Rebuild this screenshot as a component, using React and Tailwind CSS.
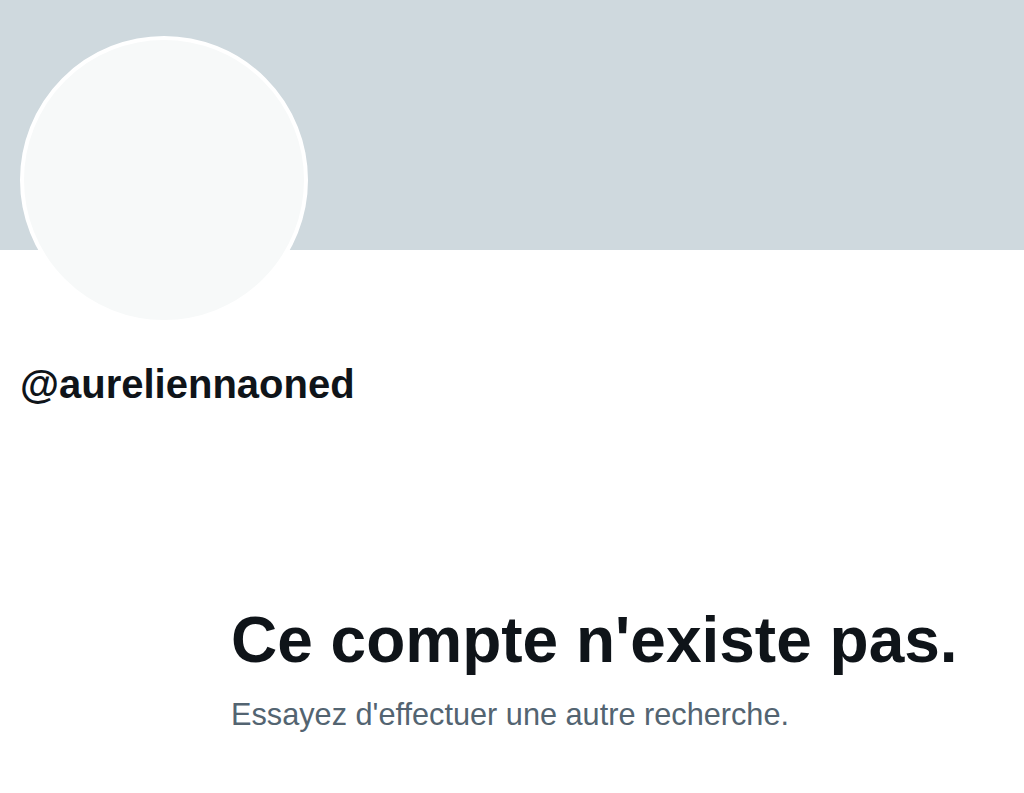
export default function App() {
    return (
        <div className="min-h-screen bg-white" style={{ fontFamily: '"Liberation Sans", Arial, sans-serif' }}>
            {/* banner */}
            <div className="h-[250px] bg-[#cfd9de]"></div>

            <div className="px-[20px]">
                {/* avatar */}
                <div className="-mt-[214px] w-[288px] h-[288px] rounded-full border-[4px] border-white bg-[#f7f9f9]"></div>

                <div className="mt-[36px] text-[40px] leading-[48px] font-bold text-[#0f1419]">
                    @aureliennaoned
                </div>
            </div>

            <div className="pl-[231px] mt-[194px]">
                <h1 className="text-[64px] leading-[77px] font-bold text-[#0f1419]">
                    Ce compte n'existe pas.
                </h1>
                <p className="mt-[17px] text-[30.7px] leading-[37px] text-[#536471]">
                    Essayez d'effectuer une autre recherche.
                </p>
            </div>
        </div>
    )
}
